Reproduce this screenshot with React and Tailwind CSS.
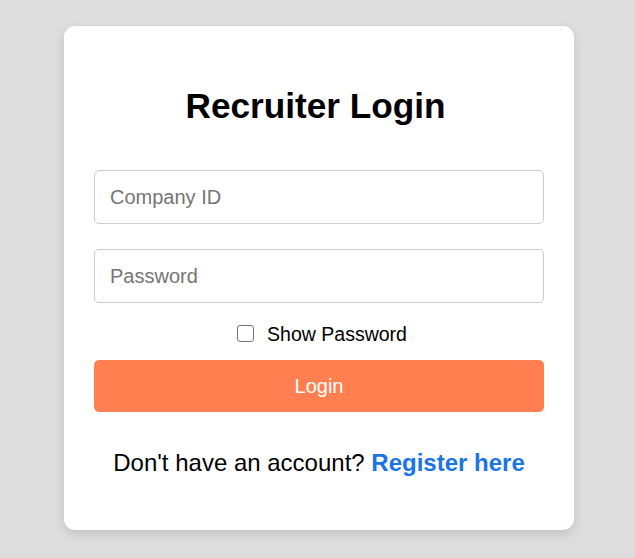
import React, { useState } from 'react';

export default function App() {
  const [showPassword, setShowPassword] = useState(false);

  return (
    <div className="min-h-screen bg-[#dddddd] pt-[26px] pl-[64px]" style={{ fontFamily: '"Liberation Sans", Arial, sans-serif' }}>
      <div className="w-[510px] h-[504px] bg-white rounded-[11px] shadow-[0_4px_10px_rgba(0,0,0,0.12)] px-[30px] pt-[60px] flex flex-col">
        <h1 className="text-[35.2px] font-bold text-black text-center leading-[40px] pr-[7px]">Recruiter Login</h1>

        <input
          type="text"
          placeholder="Company ID"
          className="mt-[44px] h-[54px] w-full border border-[#cccccc] rounded-[5px] px-[15px] text-[20px] placeholder:text-[#757575] outline-none"
        />
        <input
          type={showPassword ? 'text' : 'password'}
          placeholder="Password"
          className="mt-[25px] h-[54px] w-full border border-[#cccccc] rounded-[5px] px-[15px] text-[20px] placeholder:text-[#757575] outline-none"
        />

        <label className="mt-[20px] flex items-center justify-center gap-[13px] pl-[6px] text-[19.5px] leading-[22px] text-black">
          <input
            type="checkbox"
            checked={showPassword}
            onChange={(e) => setShowPassword(e.target.checked)}
            className="appearance-none w-[17px] h-[17px] border-[1.5px] border-[#767676] rounded-[3px] bg-white m-0 -mt-[2px]"
          />
          Show Password
        </label>

        <button className="mt-[15px] h-[52px] w-full bg-[#ff7f50] text-white text-[20px] rounded-[5px]">
          Login
        </button>

        <p className="mt-[37px] text-center text-[24px] leading-[28px] text-black">
          Don't have an account?{' '}
          <a href="#" className="font-bold text-[#1a73e8] no-underline">Register here</a>
        </p>
      </div>
    </div>
  );
}
